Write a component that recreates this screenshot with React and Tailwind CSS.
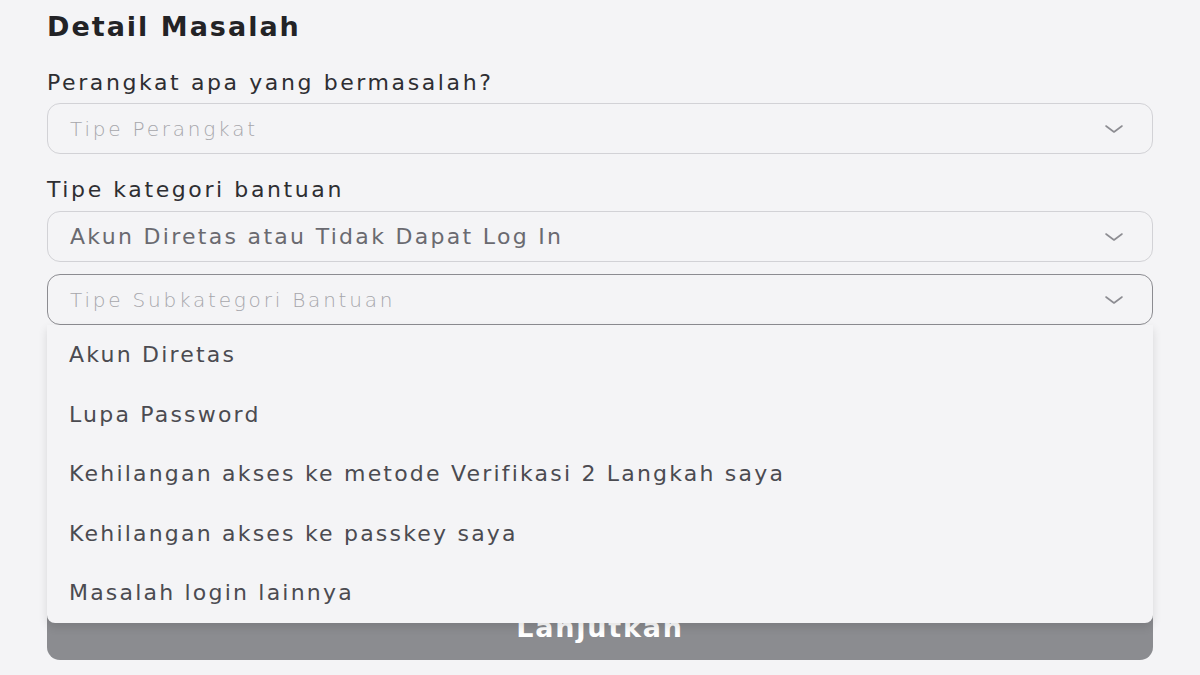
import React from "react";

const Chevron = () => (
  <svg width="20" height="10" viewBox="0 0 20 10" fill="none" stroke="#8d8d92" strokeWidth="1.6" strokeLinecap="round" strokeLinejoin="round">
    <path d="M2 2l8 6 8-6" />
  </svg>
);

const SelectBox = ({ value, placeholder, active }) => (
  <div
    className={
      "h-[51px] flex items-center justify-between pl-[22px] pr-[28px] rounded-[13px] border " +
      (active ? "border-[#8c8c91]" : "border-[#d2d2d6]")
    }
  >
    <span
      className={
        value
          ? "text-[22px] tracking-[2.3px] text-[#6a6a70]"
          : "text-[20px] tracking-[2.8px] text-[#a6a6ab] font-light"
      }
    >
      {value || placeholder}
    </span>
    <Chevron />
  </div>
);

const options = [
  "Akun Diretas",
  "Lupa Password",
  "Kehilangan akses ke metode Verifikasi 2 Langkah saya",
  "Kehilangan akses ke passkey saya",
  "Masalah login lainnya",
];

export default function App() {
  return (
    <div className="w-[1200px] h-[675px] bg-[#f4f4f6] overflow-hidden font-['DejaVu_Sans',sans-serif]">
      <div className="pl-[47px] pr-[47px] pt-[7px]">
        <h1 className="text-[27px] leading-[40px] font-bold tracking-[2px] text-[#232326]">Detail Masalah</h1>

        <div className="mt-[22px] text-[22px] leading-[28px] tracking-[2.6px] text-[#2e2e32]">Perangkat apa yang bermasalah?</div>
        <div className="mt-[6px]">
          <SelectBox placeholder="Tipe Perangkat" />
        </div>

        <div className="mt-[22px] text-[22px] leading-[28px] tracking-[2.6px] text-[#2e2e32]">Tipe kategori bantuan</div>
        <div className="mt-[7px]">
          <SelectBox value="Akun Diretas atau Tidak Dapat Log In" />
        </div>
        <div className="mt-[12px] relative">
          <SelectBox placeholder="Tipe Subkategori Bantuan" active />
          <div className="absolute left-0 right-0 top-[51px] z-10 bg-[#f4f4f6] rounded-b-[8px] shadow-[0_4px_10px_rgba(0,0,0,0.12)]">
            {options.map((o) => (
              <div key={o} className="h-[59.5px] flex items-center pl-[22px] text-[22px] tracking-[2.2px] text-[#4b4b51]">
                {o}
              </div>
            ))}
          </div>
        </div>

        <div className="mt-[271px] h-[64px] rounded-[13px] bg-[#8b8c90] flex items-center justify-center">
          <span className="text-[27px] font-bold tracking-[1.8px] text-white">Lanjutkan</span>
        </div>
      </div>
    </div>
  );
}
